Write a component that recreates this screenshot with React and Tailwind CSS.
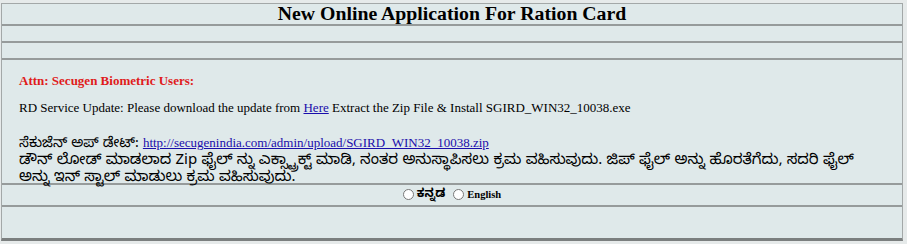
export default function App() {
  return (
    <div className="w-[907px] h-[244px] bg-[#e6eaea] pt-[3px] pl-[1px] font-[family-name:'Liberation_Serif',serif] text-black">
      <div className="w-[902px] bg-[#dfe9ea] border border-[#a3a8a8] border-b-[3px] border-b-[#7b7f7f]">
        <div className="h-[22px] flex items-center justify-center border-b-2 border-[#969b9b]">
          <h1 className="text-[19.8px] leading-none font-bold">New Online Application For Ration Card</h1>
        </div>
        <div className="h-[17px] border-b-2 border-[#969b9b]" />
        <div className="h-[17px] border-b-2 border-[#969b9b]" />
        <div className="h-[125px] border-b-2 border-[#969b9b] px-[17px] pt-[13px] text-[13px]">
          <p className="text-[#e01b1b] font-bold text-[13px] leading-[16px]">Attn: Secugen Biometric Users:</p>
          <p className="mt-[11px] leading-[16px]">
            RD Service Update: Please download the update from{" "}
            <a href="#" className="text-[#1a0dab] underline">Here</a> Extract the Zip File &amp; Install SGIRD_WIN32_10038.exe
          </p>
          <p className="mt-[18px] leading-[17px]">
            <span className="font-[family-name:'Noto_Sans_Kannada','Noto_Sans',sans-serif] text-[14px] leading-[17px]">ಸೆಕುಜೆನ್ ಅಪ್ ಡೇಟ್: </span>
            <a href="#" className="text-[#1a0dab] underline">http://secugenindia.com/admin/upload/SGIRD_WIN32_10038.zip</a>
          </p>
          <div className="font-[family-name:'Noto_Sans_Kannada','Noto_Sans',sans-serif] text-[15px] leading-[17px]">
            ಡೌನ್ ಲೋಡ್ ಮಾಡಲಾದ Zip ಫೈಲ್ ನ್ನು ಎಕ್ಸ್ಟ್ರಾಕ್ಟ್ ಮಾಡಿ, ನಂತರ ಅನುಸ್ಥಾಪಿಸಲು ಕ್ರಮ ವಹಿಸುವುದು. ಜಿಪ್ ಫೈಲ್ ಅನ್ನು ಹೊರತೆಗೆದು, ಸದರಿ ಫೈಲ್
            <br />
            ಅನ್ನು ಇನ್ ಸ್ಟಾಲ್ ಮಾಡುಲು ಕ್ರಮ ವಹಿಸುವುದು.
          </div>
        </div>
        <div className="h-[22px] border-b-2 border-[#969b9b] flex items-center justify-center font-bold">
          <label className="flex items-center">
            <input type="radio" name="lang" className="w-[11px] h-[11px] m-0 -translate-y-[1px]" />
            <span className="ml-[3px] font-[family-name:'Noto_Sans_Kannada','Noto_Sans',sans-serif] text-[12px]">ಕನ್ನಡ</span>
          </label>
          <label className="flex items-center ml-[8px]">
            <input type="radio" name="lang" className="w-[11px] h-[11px] m-0 -translate-y-[1px]" />
            <span className="ml-[3px] text-[10.5px]">English</span>
          </label>
        </div>
        <div className="h-[31px]" />
      </div>
    </div>
  );
}
